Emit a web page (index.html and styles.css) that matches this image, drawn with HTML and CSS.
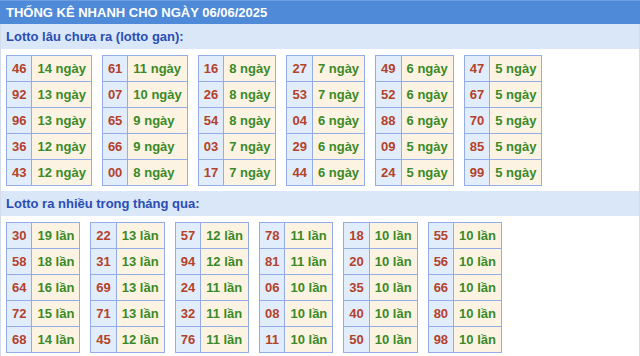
FILE: index.html
```html
<!DOCTYPE html>
<html lang="vi">
<head>
<meta charset="utf-8">
<title>Thống kê nhanh</title>
<link rel="stylesheet" href="styles.css">
</head>
<body>
<div class="box">
  <div class="title">THỐNG KÊ NHANH CHO NGÀY 06/06/2025</div>
  <div class="sec">Lotto lâu chưa ra (lotto gan):</div>
  <div class="tables">
    <table><tr><td class="n">46</td><td class="v">14 ngày</td></tr><tr><td class="n">92</td><td class="v">13 ngày</td></tr><tr><td class="n">96</td><td class="v">13 ngày</td></tr><tr><td class="n">36</td><td class="v">12 ngày</td></tr><tr><td class="n">43</td><td class="v">12 ngày</td></tr></table>
    <table><tr><td class="n">61</td><td class="v">11 ngày</td></tr><tr><td class="n">07</td><td class="v">10 ngày</td></tr><tr><td class="n">65</td><td class="v">9 ngày</td></tr><tr><td class="n">66</td><td class="v">9 ngày</td></tr><tr><td class="n">00</td><td class="v">8 ngày</td></tr></table>
    <table><tr><td class="n">16</td><td class="v">8 ngày</td></tr><tr><td class="n">26</td><td class="v">8 ngày</td></tr><tr><td class="n">54</td><td class="v">8 ngày</td></tr><tr><td class="n">03</td><td class="v">7 ngày</td></tr><tr><td class="n">17</td><td class="v">7 ngày</td></tr></table>
    <table><tr><td class="n">27</td><td class="v">7 ngày</td></tr><tr><td class="n">53</td><td class="v">7 ngày</td></tr><tr><td class="n">04</td><td class="v">6 ngày</td></tr><tr><td class="n">29</td><td class="v">6 ngày</td></tr><tr><td class="n">44</td><td class="v">6 ngày</td></tr></table>
    <table><tr><td class="n">49</td><td class="v">6 ngày</td></tr><tr><td class="n">52</td><td class="v">6 ngày</td></tr><tr><td class="n">88</td><td class="v">6 ngày</td></tr><tr><td class="n">09</td><td class="v">5 ngày</td></tr><tr><td class="n">24</td><td class="v">5 ngày</td></tr></table>
    <table><tr><td class="n">47</td><td class="v">5 ngày</td></tr><tr><td class="n">67</td><td class="v">5 ngày</td></tr><tr><td class="n">70</td><td class="v">5 ngày</td></tr><tr><td class="n">85</td><td class="v">5 ngày</td></tr><tr><td class="n">99</td><td class="v">5 ngày</td></tr></table>
  </div>
  <div class="sec">Lotto ra nhiều trong tháng qua:</div>
  <div class="tables">
    <table><tr><td class="n">30</td><td class="v">19 lần</td></tr><tr><td class="n">58</td><td class="v">18 lần</td></tr><tr><td class="n">64</td><td class="v">16 lần</td></tr><tr><td class="n">72</td><td class="v">15 lần</td></tr><tr><td class="n">68</td><td class="v">14 lần</td></tr></table>
    <table><tr><td class="n">22</td><td class="v">13 lần</td></tr><tr><td class="n">31</td><td class="v">13 lần</td></tr><tr><td class="n">69</td><td class="v">13 lần</td></tr><tr><td class="n">71</td><td class="v">13 lần</td></tr><tr><td class="n">45</td><td class="v">12 lần</td></tr></table>
    <table><tr><td class="n">57</td><td class="v">12 lần</td></tr><tr><td class="n">94</td><td class="v">12 lần</td></tr><tr><td class="n">24</td><td class="v">11 lần</td></tr><tr><td class="n">32</td><td class="v">11 lần</td></tr><tr><td class="n">76</td><td class="v">11 lần</td></tr></table>
    <table><tr><td class="n">78</td><td class="v">11 lần</td></tr><tr><td class="n">81</td><td class="v">11 lần</td></tr><tr><td class="n">06</td><td class="v">10 lần</td></tr><tr><td class="n">08</td><td class="v">10 lần</td></tr><tr><td class="n">11</td><td class="v">10 lần</td></tr></table>
    <table><tr><td class="n">18</td><td class="v">10 lần</td></tr><tr><td class="n">20</td><td class="v">10 lần</td></tr><tr><td class="n">35</td><td class="v">10 lần</td></tr><tr><td class="n">40</td><td class="v">10 lần</td></tr><tr><td class="n">50</td><td class="v">10 lần</td></tr></table>
    <table><tr><td class="n">55</td><td class="v">10 lần</td></tr><tr><td class="n">56</td><td class="v">10 lần</td></tr><tr><td class="n">66</td><td class="v">10 lần</td></tr><tr><td class="n">80</td><td class="v">10 lần</td></tr><tr><td class="n">98</td><td class="v">10 lần</td></tr></table>
  </div>
</div>
</body>
</html>
```
FILE: styles.css
```css
html, body {
  margin: 0;
  padding: 0;
  background: #ffffff;
}
body {
  font-family: "Liberation Sans", Arial, sans-serif;
  font-size: 13px;
}
.box {
  border-left: 1px solid #d3dcea;
  border-right: 1px solid #d3dcea;
  min-height: 356px;
  box-sizing: border-box;
}
.title {
  background: #4f8ad8;
  color: #ffffff;
  font-weight: bold;
  height: 23px;
  line-height: 24px;
  border-top: 1px solid #6f9fe0;
  margin-left: -1px;
  margin-right: -1px;
  padding-left: 6px;
}
.sec {
  background: #d9e7f9;
  color: #2a4db3;
  font-weight: bold;
  font-size: 13px;
  height: 25px;
  line-height: 25px;
  padding-left: 5px;
}
.tables {
  display: flex;
  gap: 10px;
  padding: 6px 5px 5px 5px;
}
table {
  border-collapse: collapse;
}
td {
  border: 1px solid #94ade9;
  height: 25px;
  padding: 0 5px;
  font-weight: bold;
  font-size: 13px;
  white-space: nowrap;
}
td.n {
  background: #e2edfb;
  color: #b3422b;
  text-align: center;
}
td.v {
  background: #fdf3e3;
  color: #3a8a27;
}
```
